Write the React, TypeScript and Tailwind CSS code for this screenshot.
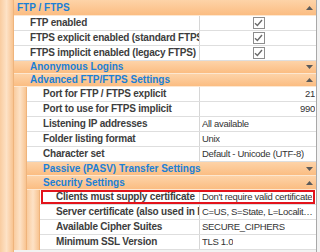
import type { ReactNode } from "react";

type RowProps = {
  label: string;
  value?: string;
  check?: boolean;
  right?: boolean;
  highlight?: boolean;
};

function Strip() {
  return (
    <div className="w-[13px] shrink-0 border-r border-[#efb47c] bg-linear-to-r from-[#f9cc9f] via-[#fde2c6] to-[#f8c491]" />
  );
}

function Arrow({ open }: { open: boolean }) {
  return (
    <svg width="7" height="4" viewBox="0 0 7 4" className="mr-[3px] shrink-0">
      {open ? <path d="M0 4 L3.5 0 L7 4 Z" fill="#5a5a5a" /> : <path d="M0 0 L3.5 4 L7 0 Z" fill="#5a5a5a" />}
    </svg>
  );
}

function Category({ title, open, h }: { title: string; open: boolean; h: "top" | "13" | "14" }) {
  const size = h === "top" ? "h-[16px] pl-[3px]" : h === "13" ? "h-[13px] pl-[16px]" : "h-[14px] pl-[16px]";
  return (
    <div
      className={
        "flex items-center border-b border-[#fde7d0] bg-linear-to-b from-[#fdd3a8] to-[#fbbd82] " + size
      }
    >
      <span className="flex-1 truncate text-[10px] font-bold leading-[12px] text-[#1b7fd6]">{title}</span>
      <Arrow open={open} />
    </div>
  );
}

function Check() {
  return (
    <div className="flex h-[12px] w-[12px] items-center justify-center border border-[#8d8d8d] bg-white">
      <svg width="9" height="8" viewBox="0 0 9 8">
        <path d="M1 4.2 L3.4 6.5 L8 1" fill="none" stroke="#6a6a6a" strokeWidth="1.4" />
      </svg>
    </div>
  );
}

function Row({ label, value, check, right, highlight }: RowProps) {
  return (
    <div className="relative flex h-[15px] border-b border-[#dedede] bg-white">
      <div className="flex-1 overflow-hidden whitespace-nowrap pl-[16px] text-[10px] font-bold leading-[14px] tracking-[-0.2px] text-[#3d3d3d]">
        {label}
      </div>
      <div
        className={
          "flex w-[117px] shrink-0 items-center overflow-hidden border-l border-[#d6d6d6] pl-[2px] pr-[1px] text-[9.5px] tracking-[-0.3px] text-[#333]" +
          (right ? " justify-end" : "") +
          (check ? " justify-center" : "")
        }
      >
        {check ? <Check /> : <span className="truncate">{value}</span>}
      </div>
      {highlight && <div className="absolute inset-y-0 right-[1px] left-[1px] border-2 border-[#e3131b]" />}
    </div>
  );
}

function Nest({ children }: { children: ReactNode }) {
  return (
    <div className="flex">
      <Strip />
      <div className="flex min-w-0 flex-1 flex-col">{children}</div>
    </div>
  );
}

export default function App() {
  return (
    <div className="flex h-[252px] w-[320px] overflow-hidden bg-[#f2f2f2] font-['Liberation_Sans',Arial,sans-serif]">
      <div className="flex w-[317px] shrink-0 border-r border-[#a8a8a8]">
        <div className="w-[14px] shrink-0 border-r border-[#efb47c] bg-linear-to-r from-[#f9cc9f] via-[#fde2c6] to-[#f8c491]" />
        <div className="flex min-w-0 flex-1 flex-col">
          <Category title="FTP / FTPS" open h="top" />
          <Row label="FTP enabled" check />
          <Row label="FTPS explicit enabled (standard FTPS)" check />
          <Row label="FTPS implicit enabled (legacy FTPS)" check />
          <Category title="Anonymous Logins" open={false} h="13" />
          <Category title="Advanced FTP/FTPS Settings" open h="13" />
          <Nest>
            <Row label="Port for FTP / FTPS explicit" value="21" right />
            <Row label="Port to use for FTPS implicit" value="990" right />
            <Row label="Listening IP addresses" value="All available" />
            <Row label="Folder listing format" value="Unix" />
            <Row label="Character set" value="Default - Unicode (UTF-8)" />
            <Category title="Passive (PASV) Transfer Settings" open={false} h="14" />
            <Category title="Security Settings" open h="14" />
            <Nest>
              <Row label="Clients must supply certificate" value="Don't require valid certificate" highlight />
              <Row label="Server certificate (also used in HTTPS)" value="C=US, S=State, L=Locality, O=Org" />
              <Row label="Available Cipher Suites" value="SECURE_CIPHERS" />
              <Row label="Minimum SSL Version" value="TLS 1.0" />
            </Nest>
          </Nest>
        </div>
      </div>
    </div>
  );
}
